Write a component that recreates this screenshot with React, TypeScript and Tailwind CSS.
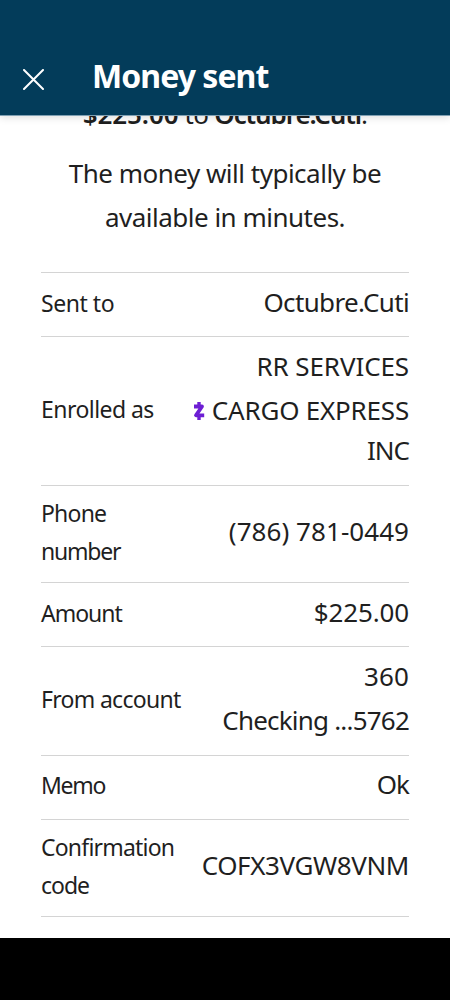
import React from 'react';

interface LineProps {
  text: string;
  tracking: string;
}

interface Detail {
  label: LineProps[];
  value: LineProps[];
  height: string;
}

const details: Detail[] = [
  {
    label: [{ text: 'Sent to', tracking: 'tracking-[-0.45px]' }],
    value: [{ text: 'Octubre.Cuti', tracking: 'tracking-[-0.65px] pt-[2px]' }],
    height: 'h-[64px]',
  },
  {
    label: [{ text: 'Enrolled as', tracking: 'tracking-[-0.55px]' }],
    value: [
      { text: 'RR SERVICES', tracking: 'tracking-[-0.1px]' },
      { text: 'CARGO EXPRESS', tracking: 'tracking-[-0.2px]' },
      { text: 'INC', tracking: 'tracking-[-1px]' },
    ],
    height: 'h-[149px]',
  },
  {
    label: [
      { text: 'Phone', tracking: 'tracking-[-0.8px]' },
      { text: 'number', tracking: 'tracking-[-1.2px] -mt-px' },
    ],
    value: [{ text: '(786) 781-0449', tracking: 'tracking-[0.05px]' }],
    height: 'h-[97px]',
  },
  {
    label: [{ text: 'Amount', tracking: 'tracking-[-1px]' }],
    value: [{ text: '$225.00', tracking: 'tracking-[-0.15px] pt-[2px]' }],
    height: 'h-[64px]',
  },
  {
    label: [{ text: 'From account', tracking: 'tracking-[-0.7px]' }],
    value: [
      { text: '360', tracking: 'tracking-[0.1px]' },
      { text: 'Checking ...5762', tracking: 'tracking-[-0.8px]' },
    ],
    height: 'h-[109px]',
  },
  {
    label: [{ text: 'Memo', tracking: 'tracking-[-1.3px] pb-[2px]' }],
    value: [{ text: 'Ok', tracking: 'tracking-[-1px]' }],
    height: 'h-[64px]',
  },
  {
    label: [
      { text: 'Confirmation', tracking: 'tracking-[-0.8px]' },
      { text: 'code', tracking: 'tracking-[-1px] -mt-px' },
    ],
    value: [{ text: 'COFX3VGW8VNM', tracking: 'tracking-[-0.4px]' }],
    height: 'h-[97px]',
  },
];

function ZelleMark() {
  return (
    <svg width="12" height="18" viewBox="0 0 12 18" fill="none" stroke="#6d1ed4" className="mt-[2px] -mr-px shrink-0">
      <path d="M1 4.5H9L3 13.3H11.2" strokeWidth="3.8" strokeLinejoin="round" />
      <path d="M6 0V4M6 14V18" strokeWidth="3.4" />
    </svg>
  );
}

function App() {
  return (
    <div className="flex h-[1000px] w-[450px] flex-col overflow-hidden bg-white font-['Noto_Sans',sans-serif] text-[#1f1f1f]">
      {/* Header */}
      <header className="z-10 flex h-[115px] shrink-0 items-end bg-[#033c5a] pb-[15px] pl-[23px] text-white shadow-[0_1px_0_#7fa0b3,0_2px_8px_rgba(0,0,0,0.15)]">
        <svg width="21" height="21" viewBox="0 0 21 21" fill="none" stroke="currentColor" strokeWidth="2" strokeLinecap="round" className="mb-[10px]">
          <path d="M1 1L20 20M20 1L1 20" />
        </svg>
        <h1 className="ml-[48px] text-[32px] leading-[48px] font-bold tracking-[-0.95px] whitespace-nowrap">Money sent</h1>
      </header>

      <main className="flex min-h-0 flex-1 flex-col px-[41px]">
        {/* Scrolled message */}
        <div className="-mt-[23px] text-center text-[26px] leading-[44px] whitespace-nowrap">
          <p className="tracking-[-0.7px]">
            <b className="font-semibold tracking-[-0.1px]">$225.00</b> to{' '}
            <b className="font-semibold tracking-[-1.1px]">Octubre.Cuti</b>.
          </p>
          <p className="mt-[15px] tracking-[-0.5px]">The money will typically be</p>
          <p className="tracking-[-0.5px]">available in minutes.</p>
        </div>

        {/* Transfer details */}
        <dl className="mt-[33px] border-t border-[#d4d4d4]">
          {details.map((item) => (
            <div
              key={item.label[0].text}
              className={`flex items-center justify-between border-b border-[#d4d4d4] pb-[5px] whitespace-nowrap ${item.height}`}
            >
              <dt className="pt-[2px] text-[23px] leading-[39px]">
                {item.label.map((line) => (
                  <div key={line.text} className={line.tracking}>{line.text}</div>
                ))}
              </dt>
              <dd className="pb-[2px] text-right text-[26px]">
                {item.value.map((line) => (
                  <div
                    key={line.text}
                    className={`flex items-center justify-end gap-[8px] ${line.text === 'INC' ? 'pb-[4px] leading-[36px]' : 'leading-[44px]'}`}
                  >
                    {line.text === 'CARGO EXPRESS' && <ZelleMark />}
                    <span className={line.tracking}>{line.text}</span>
                  </div>
                ))}
              </dd>
            </div>
          ))}
        </dl>
      </main>

      {/* Navigation bar area */}
      <footer className="h-[62px] shrink-0 bg-black" />
    </div>
  );
}

export default App;
